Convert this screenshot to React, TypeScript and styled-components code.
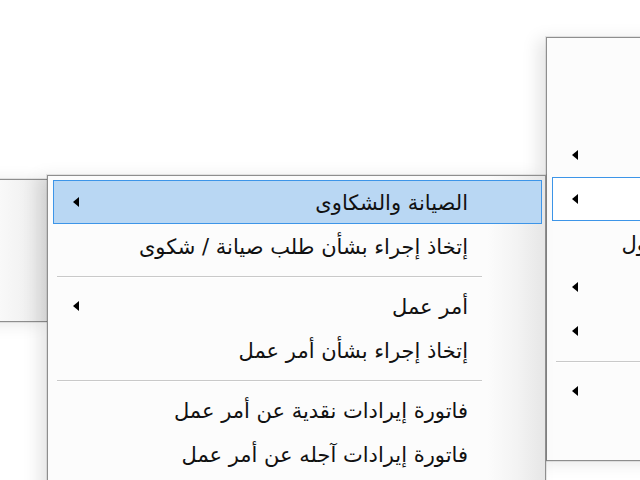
import React from "react";
import styled, { createGlobalStyle } from "styled-components";

const Global = createGlobalStyle`
  html, body { margin: 0; padding: 0; background: #ffffff; overflow: hidden; }
  body { width: 640px; height: 480px; font-family: "DejaVu Sans", "Noto Sans", sans-serif; }
`;

const Desktop = styled.div`
  position: relative;
  width: 640px;
  height: 480px;
  overflow: hidden;
  background: #ffffff;
`;

const Menu = styled.div<{ $left: number; $top: number; $width: number; $height: number; $padTop: number; $z: number }>`
  position: absolute;
  left: ${(p) => p.$left}px;
  top: ${(p) => p.$top}px;
  width: ${(p) => p.$width}px;
  height: ${(p) => p.$height}px;
  z-index: ${(p) => p.$z};
  box-sizing: border-box;
  direction: rtl;
  border: 1px solid #8e8e8e;
  background: linear-gradient(to left, #e6e6e6 0px, #f3f3f3 28px, #fcfcfc 58px, #fcfcfc 100%);
  box-shadow: -8px 2px 16px rgba(0, 0, 0, 0.1), 0 0 0 1px rgba(0, 0, 0, 0.08);
  padding: ${(p) => p.$padTop}px 3px 3px 5px;
  display: flex;
  flex-direction: column;
`;

const Item = styled.div<{ $state?: "hot" | "open" }>`
  height: 44px;
  flex: none;
  box-sizing: border-box;
  display: flex;
  align-items: center;
  padding: 2px 73px 0 19px;
  border: 1px solid ${(p) => (p.$state ? "#3d95e8" : "transparent")};
  background: ${(p) => (p.$state === "hot" ? "#b9d7f3" : p.$state === "open" ? "#ffffff" : "transparent")};
  color: #111;
  font-size: 21px;
  white-space: nowrap;
`;

const Label = styled.span`
  flex: none;
`;

const Arrow = styled.span`
  margin-right: auto;
  margin-bottom: 2px;
  width: 0;
  height: 0;
  border-top: 5px solid transparent;
  border-bottom: 5px solid transparent;
  border-right: 6px solid #000;
`;

const Separator = styled.div`
  height: 16px;
  flex: none;
  display: flex;
  align-items: center;
  padding: 0 60px 0 4px;
  &::before {
    content: "";
    flex: 1;
    height: 1px;
    background: #c9c9c9;
    box-shadow: 0 1px 0 #ffffff;
  }
`;

type Entry = { label?: string; sub?: boolean; state?: "hot" | "open" } | "sep";

const middleEntries: Entry[] = [
  { label: "الصيانة والشكاوى", sub: true, state: "hot" },
  { label: "إتخاذ إجراء بشأن طلب صيانة / شكوى" },
  "sep",
  { label: "أمر عمل", sub: true },
  { label: "إتخاذ إجراء بشأن أمر عمل" },
  "sep",
  { label: "فاتورة إيرادات نقدية عن أمر عمل" },
  { label: "فاتورة إيرادات آجله عن أمر عمل" },
  { label: "تقارير الصيانة" },
];

const rightEntries: Entry[] = [
  { label: "الملف" },
  { label: "العملاء" },
  { label: "المبيعات", sub: true },
  { label: "الصيانة", sub: true, state: "open" },
  { label: "حسابات الأصول" },
  { label: "المخازن", sub: true },
  { label: "الخزينة", sub: true },
  "sep",
  { label: "التقارير", sub: true },
  { label: "خروج" },
];

const MenuList = ({ entries }: { entries: Entry[] }) => (
  <>
    {entries.map((e, i) =>
      e === "sep" ? (
        <Separator key={i} />
      ) : (
        <Item key={i} $state={e.state}>
          <Label>{e.label}</Label>
          {e.sub && <Arrow />}
        </Item>
      )
    )}
  </>
);

export default function App() {
  return (
    <Desktop>
      <Global />
      <Menu $left={-200} $top={179} $width={249} $height={143} $padTop={3} $z={1} />
      <Menu $left={546} $top={37} $width={292} $height={424} $padTop={7} $z={2}>
        <MenuList entries={rightEntries} />
      </Menu>
      <Menu $left={47} $top={175} $width={499} $height={360} $padTop={4} $z={3}>
        <MenuList entries={middleEntries} />
      </Menu>
    </Desktop>
  );
}
